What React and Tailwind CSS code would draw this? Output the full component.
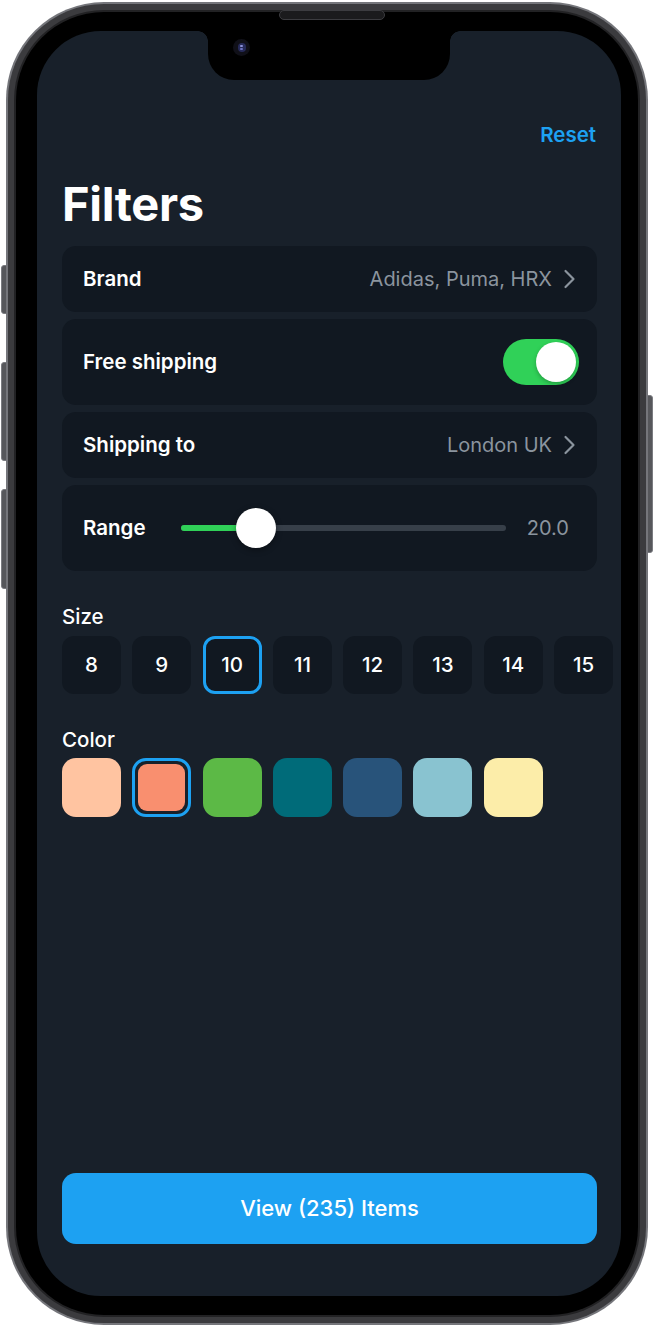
import React from "react";

const sizes = ["8", "9", "10", "11", "12", "13", "14", "15"];
const colors = ["#FFC4A1", "#F98F6F", "#5CB946", "#006B79", "#28537A", "#89C3D0", "#FCEDA9"];

function Chevron() {
  return (
    <svg width="13" height="20" viewBox="0 0 13 20" fill="none" className="ml-[11px]">
      <path d="M2.5 2L10.5 10L2.5 18" stroke="#8B949E" strokeWidth="2.2" strokeLinecap="round" strokeLinejoin="round" />
    </svg>
  );
}

function Row({ label, children, tall }) {
  return (
    <div
      className={`flex items-center justify-between rounded-[14px] bg-[#111821] pl-[21px] ${
        tall ? "h-[86px] pr-[18px]" : "h-[66px] pr-[21px]"
      }`}
    >
      <p className="text-[20.5px] font-semibold text-white leading-[24px]">{label}</p>
      {children}
    </div>
  );
}

export default function App() {
  return (
    <div className="relative w-[654px] h-[1327px] bg-white overflow-hidden font-['Inter','Noto_Sans',sans-serif]">
      {/* side buttons */}
      <div className="absolute left-[1px] top-[265px] w-[6px] h-[49px] rounded-l-[3px] bg-[#56575b] border border-[#7a7b80]" />
      <div className="absolute left-[1px] top-[362px] w-[6px] h-[99px] rounded-l-[3px] bg-[#56575b] border border-[#7a7b80]" />
      <div className="absolute left-[1px] top-[489px] w-[6px] h-[100px] rounded-l-[3px] bg-[#56575b] border border-[#7a7b80]" />
      <div className="absolute right-[1px] top-[395px] w-[6px] h-[158px] rounded-r-[3px] bg-[#56575b] border border-[#7a7b80]" />

      {/* phone frame */}
      <div className="absolute left-[6px] top-[2px] w-[642px] h-[1323px] rounded-[98px] bg-[#75767b] p-[2px]">
        <div className="h-full rounded-[96px] bg-[#3b3b3e] p-[6px]">
          <div className="h-full rounded-[90px] bg-[#222224] p-[2px]">
            <div className="relative h-full rounded-[88px] bg-black pt-[19px] pb-[19px] pl-[21px] pr-[17px]">
              {/* speaker */}
              <div className="absolute left-[263px] top-[-2px] w-[106px] h-[10px] rounded-full bg-[#1b1b1d] border border-[#3c3c40]" />

              {/* screen */}
              <div className="relative h-full rounded-[64px] overflow-hidden bg-[#18202a] flex flex-col pl-[25px] pr-[24px]">
                {/* notch */}
                <div className="absolute left-[171px] top-0 w-[242px] h-[49px] rounded-b-[26px] bg-black">
                  <div className="absolute left-[-10px] top-0 w-[10px] h-[10px] bg-[radial-gradient(circle_at_0_100%,transparent_9.5px,#000_10px)]" />
                  <div className="absolute right-[-10px] top-0 w-[10px] h-[10px] bg-[radial-gradient(circle_at_100%_100%,transparent_9.5px,#000_10px)]" />
                  <div className="absolute left-[25px] top-[8px] w-[17px] h-[17px] rounded-full bg-[#101018] flex items-center justify-center">
                    <div className="w-[8px] h-[9px] rounded-full bg-[#262a5a] flex flex-col items-center justify-center gap-[1px]">
                      <div className="w-[3px] h-[2px] rounded-full bg-[#8c92d8]" />
                      <div className="w-[3px] h-[2px] rounded-full bg-[#6b70c0]" />
                    </div>
                  </div>
                </div>

                <div className="pt-[92px] flex justify-end">
                  <p className="text-[20.5px] leading-[24px] font-semibold text-[#1DA1F2] pr-[1px]">Reset</p>
                </div>

                <h1 className="mt-[30px] text-[47px] leading-[54px] font-bold text-white tracking-[-0.3px]">Filters</h1>

                <div className="mt-[15px] flex flex-col gap-[7px]">
                  <Row label="Brand">
                    <div className="flex items-center">
                      <p className="text-[20px] leading-[24px] text-[#8B949E]">Adidas, Puma, HRX</p>
                      <Chevron />
                    </div>
                  </Row>
                  <Row label="Free shipping" tall>
                    <div className="w-[76px] h-[46px] rounded-full bg-[#30D158] p-[3px] flex justify-end">
                      <div className="w-[40px] h-[40px] rounded-full bg-white shadow-[0_2px_4px_rgba(0,0,0,0.25)]" />
                    </div>
                  </Row>
                  <Row label="Shipping to">
                    <div className="flex items-center">
                      <p className="text-[20px] leading-[24px] text-[#8B949E]">London UK</p>
                      <Chevron />
                    </div>
                  </Row>
                  <div className="flex items-center h-[86px] rounded-[14px] bg-[#111821] pl-[21px] pr-[28px]">
                    <p className="w-[98px] text-[20.5px] font-semibold text-white leading-[24px]">Range</p>
                    <div className="relative flex-1 h-[6px] rounded-full bg-[#373f49]">
                      <div className="absolute left-0 top-0 h-[6px] w-[75px] rounded-full bg-[#30D158]" />
                      <div className="absolute left-[55px] top-[-17px] w-[40px] h-[40px] rounded-full bg-white shadow-[0_2px_6px_rgba(0,0,0,0.35)]" />
                    </div>
                    <p className="ml-[21px] text-[20px] leading-[24px] text-[#8B949E]">20.0</p>
                  </div>
                </div>

                <p className="mt-[34px] text-[20.5px] leading-[24px] font-medium text-white">Size</p>
                <div className="mt-[7px] flex gap-[11.3px]">
                  {sizes.map((s) => (
                    <div
                      key={s}
                      className={`shrink-0 w-[59px] h-[58px] rounded-[12px] bg-[#111821] flex items-center justify-center text-[20.5px] font-medium text-white ${
                        s === "10" ? "border-[3px] border-[#1DA1F2]" : ""
                      }`}
                    >
                      {s}
                    </div>
                  ))}
                </div>

                <p className="mt-[34px] text-[20.5px] leading-[24px] font-medium text-white">Color</p>
                <div className="mt-[6px] flex gap-[11.3px]">
                  {colors.map((c, i) =>
                    i === 1 ? (
                      <div key={c} className="shrink-0 w-[59px] h-[59px] rounded-[14px] border-[3px] border-[#1DA1F2] bg-[#18202a] p-[3px]">
                        <div className="w-full h-full rounded-[9px] bg-[#F98F6F]" />
                      </div>
                    ) : (
                      <div key={c} className="shrink-0 w-[59px] h-[59px] rounded-[14px]" style={{ backgroundColor: c }} />
                    )
                  )}
                </div>

                <div className="flex-1" />

                <div className="mb-[52px] h-[71px] rounded-[14px] bg-[#1DA1F2] flex items-center justify-center">
                  <p className="text-[22px] font-medium text-white">View (235) Items</p>
                </div>
              </div>
            </div>
          </div>
        </div>
      </div>
    </div>
  );
}
